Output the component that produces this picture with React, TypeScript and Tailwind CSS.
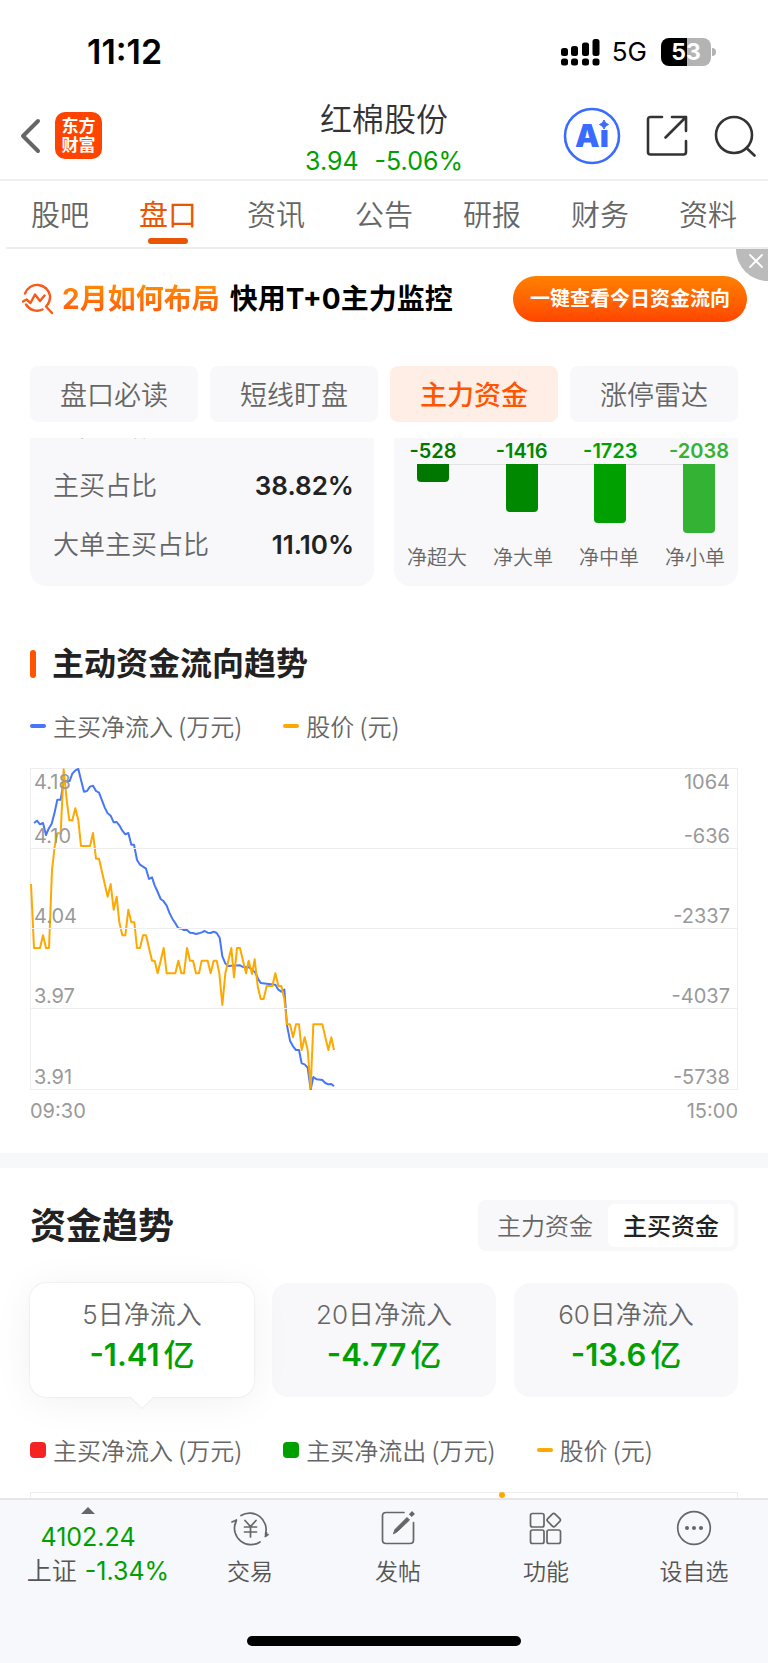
import type { ReactNode } from "react";

const tabs = ["股吧", "盘口", "资讯", "公告", "研报", "财务", "资料"];
const pills = ["盘口必读", "短线盯盘", "主力资金", "涨停雷达"];

const orders = [
  { label: "净超大", value: "-528", height: 18, bar: "bg-[#007800]", text: "text-[#007800]" },
  { label: "净大单", value: "-1416", height: 48, bar: "bg-[#008800]", text: "text-[#008800]" },
  { label: "净中单", value: "-1723", height: 59, bar: "bg-[#00a000]", text: "text-[#00a000]" },
  { label: "净小单", value: "-2038", height: 69, bar: "bg-[#33b233]", text: "text-[#33b233]" },
];

const flows = [
  { label: "5日净流入", value: "-1.41", active: true },
  { label: "20日净流入", value: "-4.77", active: false },
  { label: "60日净流入", value: "-13.6", active: false },
];

const inflowLine =
  "42,219 51,212 60,223 69,219 78,255 86,236 95,221 104,187 112,149 122,149 131,95 140,94 149,93 157,71 166,61 175,57 183,90 192,125 201,123 210,110 219,107 228,123 237,128 246,151 254,172 263,190 272,197 281,217 290,216 298,226 307,242 316,253 325,249 334,284 342,284 351,330 360,344 369,350 378,356 387,387 396,382 404,406 413,426 422,447 431,454 440,467 448,488 457,506 466,520 475,535 484,536 492,540 501,540 510,548 519,549 528,552 537,550 545,547 554,543 563,548 572,549 581,545 590,549 599,563 607,619 616,640 624,648 634,647 660,646 669,651 687,652 700,663 705,666 714,686 722,699 740,701 766,704 775,719 784,725 793,719 801,826 810,872 819,889 828,900 837,900 845,940 854,943 863,953 872,1019 880,981 890,988 907,990 916,999 925,1003 934,1002 942,1009";

const priceLine =
  "33,402 42,594 60,594 69,556 78,594 87,594 96,360 104,290 112,250 122,250 131,58 140,150 148,211 157,211 166,175 175,211 183,288 210,288 219,249 228,326 237,326 263,440 272,402 281,479 290,440 298,517 307,556 316,556 325,479 334,517 343,517 351,594 360,594 369,556 378,556 387,594 396,632 404,632 413,670 422,632 431,594 440,670 466,670 475,632 484,670 492,670 501,594 510,632 519,632 528,670 537,670 545,632 563,632 572,670 581,632 590,632 598,670 607,765 616,670 625,632 634,594 642,682 651,594 660,594 669,632 678,670 686,632 696,672 704,628 713,708 722,747 731,747 740,708 757,708 766,670 775,708 784,708 793,747 801,823 810,823 819,862 828,823 837,823 845,900 854,862 863,900 872,1014 880,823 907,823 925,900 934,862 942,900";

const axisRows = [
  ["4.10", "-636"],
  ["4.04", "-2337"],
  ["3.97", "-4037"],
  ["3.91", "-5738"],
];

function StatusBar() {
  return (
    <div className="flex h-[90px] items-center justify-between pr-[52px] pl-[87px] pt-[14px] text-black">
      <span className="text-[34px] leading-10 font-semibold">11:12</span>
      <div className="flex items-center">
        <svg className="h-7 w-10" viewBox="0 0 40 28" aria-label="信号">
          <rect x="1" y="10" width="7" height="8" rx="2.5" />
          <rect x="11" y="8" width="7" height="10" rx="2.5" />
          <rect x="22" y="4.500" width="7" height="13.500" rx="2.5" />
          <rect x="32.500" y="1" width="7" height="17" rx="2.5" />
          <rect x="1" y="20.500" width="7" height="7" rx="2.5" />
          <rect x="11" y="20.500" width="7" height="7" rx="2.5" />
          <rect x="22" y="20.500" width="7" height="7" rx="2.5" />
          <rect x="32.500" y="20.500" width="7" height="7" rx="2.5" />
        </svg>
        <span className="ml-3 text-[26px] leading-8">5G</span>
        <div className="ml-[14px] flex h-7 w-[50px] items-center justify-center rounded-lg bg-linear-to-r from-black from-53% to-[#b3b3b3] to-53% text-[23px] leading-7 font-bold text-white">
          53
        </div>
        <div className="ml-px h-2 w-1 rounded-r-full bg-[#b3b3b3]" />
      </div>
    </div>
  );
}

function Header() {
  return (
    <header className="grid h-[91px] grid-cols-[1fr_auto_1fr] items-center border-b-2 border-[#eeeeee] px-5 pt-[2px]">
      <div className="flex items-center gap-[14px]">
        <button type="button" aria-label="返回">
          <svg className="h-9 w-[21px]" viewBox="0 0 21 36" fill="none" stroke="#666" strokeWidth="4" strokeLinecap="round" strokeLinejoin="round">
            <path d="M18 3 3 18l15 15" />
          </svg>
        </button>
        <a href="#home" className="flex h-[47px] w-[47px] flex-col items-center justify-center rounded-[10px] bg-[#ff4400] text-[17px] leading-[19px] font-bold text-white">
          <span>东方</span>
          <span>财富</span>
        </a>
      </div>
      <div className="flex flex-col items-center pt-1">
        <h1 className="text-[32px] leading-[46px] font-[350] text-[#333]">红棉股份</h1>
        <p className="flex gap-4 text-[25px] leading-9 text-[#00a000]">
          <span>3.94</span>
          <span>-5.06%</span>
        </p>
      </div>
      <div className="-mr-2 flex items-center justify-end">
        <button type="button" aria-label="Ai">
          <svg className="h-[58px] w-[58px]" viewBox="0 0 58 58">
            <circle cx="29" cy="29" r="27" fill="none" stroke="#3a6bff" strokeWidth="2.6" />
            <text x="12" y="39.500" fontSize="31" fontWeight="900" fill="#3a6bff" fontFamily="Inter, sans-serif">Ai</text>
            <rect x="35" y="12" width="13" height="11" fill="#fff" />
            <path d="M41 13q1 3.5 4.500 4.500-3.5 1-4.500 4.500-1-3.500-4.500-4.500 3.500-1 4.500-4.500z" fill="#3a6bff" stroke="#3a6bff" strokeWidth="1" />
          </svg>
        </button>
        <button type="button" aria-label="分享" className="ml-[25px]">
          <svg className="h-[42px] w-[42px]" viewBox="0 0 42 42" fill="none" stroke="#333" strokeWidth="2.6" strokeLinecap="round" strokeLinejoin="round">
            <path d="M16 2H4.500Q2 2 2 4.500V37q0 2.500 2.500 2.500H37.500Q40 39.500 40 37V26M26 2H40V16M40 2 19.500 22.500" />
          </svg>
        </button>
        <button type="button" aria-label="搜索" className="ml-[26px]">
          <svg className="h-[42px] w-[42px]" viewBox="0 0 42 42" fill="none" stroke="#333" strokeWidth="2.6" strokeLinecap="round">
            <circle cx="20" cy="20" r="18" />
            <path d="m32.500 33 8 7.500" />
          </svg>
        </button>
      </div>
    </header>
  );
}

function Banner() {
  return (
    <section className="relative flex h-[97px] items-center justify-between overflow-hidden pt-[2px] pr-[21px] pl-[22px]">
      <div className="flex items-center">
        <svg className="mr-2 h-8 w-8" viewBox="0 0 32 32" fill="none" stroke="#f85a1a" strokeWidth="2.400" strokeLinecap="round" strokeLinejoin="round">
          <path d="M3 10.500A13 13 0 0 1 28 12.500Q28.500 19 24 23.500L30 30M4 21.500A13 13 0 0 0 20.500 26.500" />
          <path d="M1 18.500 4.500 16.500 8.500 20 13 11.500 18 18 22.500 12.500" />
        </svg>
        <strong className="bg-linear-to-b from-[#ff9500] to-[#ff4d0d] bg-clip-text text-[28px] leading-10 font-bold text-transparent">2月如何布局</strong>
        <strong className="ml-[10px] text-[28px] leading-10 font-bold text-black">快用T+0主力监控</strong>
      </div>
      <a href="#flow" className="flex h-[46px] items-center rounded-full bg-linear-to-b from-[#ff8000] to-[#ff4400] px-[17px] pt-px text-[20px] font-bold text-white">
        一键查看今日资金流向
      </a>
      <button type="button" aria-label="关闭" className="absolute top-0 right-0 flex h-8 w-8 items-center justify-center rounded-bl-full bg-[#bbbbbb]">
        <svg className="mb-2 ml-2 h-[14px] w-[14px]" viewBox="0 0 14 14" stroke="#fff" strokeWidth="1.800" strokeLinecap="round">
          <path d="m1 1 12 12M13 1 1 13" />
        </svg>
      </button>
    </section>
  );
}

function Metric({ label, value }: { label: string; value: string }) {
  return (
    <div className="flex h-[59px] items-center justify-between">
      <dt className="text-[26px] font-[350] text-[#666]">{label}</dt>
      <dd className="text-[26px] font-semibold text-[#222]">{value}</dd>
    </div>
  );
}

function Summary() {
  return (
    <section className="mx-[30px] grid grid-cols-2 gap-5 overflow-hidden">
      <div className="h-[148px] overflow-hidden rounded-b-2xl bg-[#f8f8fa] pr-5 pl-[23px]">
        <dl className="-mt-[41px]">
          <Metric label="主买净额" value="" />
          <Metric label="主买占比" value="38.82%" />
          <Metric label="大单主买占比" value="11.10%" />
        </dl>
      </div>
      <div className="h-[148px] rounded-b-2xl bg-[#f8f8fa]">
        <div className="mx-[23px] flex justify-between border-b border-[#e3e3e3]">
          {orders.map((o) => (
            <div key={o.label} className="flex w-8 flex-col items-center">
              <span className={`flex h-[26px] items-center text-[20px] font-semibold ${o.text}`}>{o.value}</span>
            </div>
          ))}
        </div>
        <div className="-mt-px flex h-[75px] items-start justify-between px-[23px]">
          {orders.map((o) => (
            <div key={o.label} className={`w-8 rounded-b-[4px] ${o.bar}`} style={{ height: o.height }} />
          ))}
        </div>
        <div className="grid grid-cols-4 pt-[6px] text-center text-[20px] leading-[26px] font-[350] text-[#666]">
          {orders.map((o) => (
            <span key={o.label}>{o.label}</span>
          ))}
        </div>
      </div>
    </section>
  );
}

function Legend({ marker, children }: { marker: string; children: ReactNode }) {
  return (
    <span className="flex items-center gap-[7px]">
      <i className={marker} />
      {children}
    </span>
  );
}

const legendRow = "flex gap-[41px] font-['Noto_Sans_CJK_SC',sans-serif] text-[24px] leading-9 font-[350] text-[#666]";

function TrendChart() {
  return (
    <section className="px-[30px] pt-[55px] pb-[29px]">
      <h2 className="flex items-center gap-4 text-[32px] leading-[46px] font-bold text-[#222]">
        <i className="h-7 w-[6px] rounded-full bg-[#ff5500]" />
        主动资金流向趋势
      </h2>
      <div className={`mt-[21px] ${legendRow}`}>
        <Legend marker="h-1 w-4 rounded-full bg-[#4676fa]">主买净流入 (万元)</Legend>
        <Legend marker="h-1 w-4 rounded-full bg-[#ffa800]">股价 (元)</Legend>
      </div>
      <div className="relative mt-6 border border-[#eeeeee] text-[20px] leading-6 text-[#999]">
        <svg className="absolute -inset-px h-[calc(100%+2px)] w-[calc(100%+2px)]" viewBox="30 54 2124 966" preserveAspectRatio="none" fill="none" strokeWidth="2" strokeLinejoin="round">
          <polyline points={inflowLine} stroke="#4676fa" vectorEffect="non-scaling-stroke" />
          <polyline points={priceLine} stroke="#ffa800" vectorEffect="non-scaling-stroke" />
        </svg>
        {axisRows.map(([price, flow], i) => (
          <div key={price} className="relative flex h-20 flex-col justify-between border-b border-[#eeeeee] pt-px pr-[7px] pl-[3px] last:border-b-0">
            <div className="flex justify-between">
              <span>{i === 0 ? "4.18" : ""}</span>
              <span>{i === 0 ? "1064" : ""}</span>
            </div>
            <div className="flex justify-between">
              <span>{price}</span>
              <span>{flow}</span>
            </div>
          </div>
        ))}
      </div>
      <div className="mt-2 flex justify-between text-[20px] leading-[26px] text-[#999]">
        <span>09:30</span>
        <span>15:00</span>
      </div>
    </section>
  );
}

function FundTrend() {
  return (
    <section className="border-t-[15px] border-[#f7f8fa] px-[30px] pt-8">
      <div className="flex items-center justify-between">
        <h2 className="pt-[2px] text-[36px] leading-[49px] font-bold text-[#222]">资金趋势</h2>
        <div className="flex h-[51px] rounded-lg bg-[#f8f8fa] p-1 text-[24px]">
          <button type="button" className="px-[15px] pt-[2px] font-[350] text-[#666]">主力资金</button>
          <button type="button" className="rounded-md bg-white px-[15px] pt-[2px] font-medium text-[#222]">主买资金</button>
        </div>
      </div>
      <div className="mt-8 grid grid-cols-3 gap-[18px]">
        {flows.map((f) => (
          <button
            type="button"
            key={f.label}
            className={
              f.active
                ? "relative flex h-[114px] flex-col items-center rounded-2xl bg-white pt-[14px] shadow-[0_0_2px_rgba(0,0,0,0.12),0_4px_40px_rgba(0,0,0,0.06)]"
                : "flex h-[114px] flex-col items-center rounded-2xl bg-[#f8f8fa] pt-[14px]"
            }
          >
            <span className="text-[26px] leading-9 font-[350] text-[#666]">{f.label}</span>
            <span className="flex gap-1 text-[31px] leading-[44px] font-semibold text-[#00a000]">
              {f.value}
              <span className="font-medium">亿</span>
            </span>
            {f.active && (
              <svg className="absolute top-full left-1/2 -mt-px h-[13px] w-6 -translate-x-1/2" viewBox="0 0 24 13">
                <path d="M0 0h24L12 12.500z" fill="#fff" />
                <path d="M0 1 12 12.500 24 1" fill="none" stroke="#ececec" />
              </svg>
            )}
          </button>
        ))}
      </div>
      <div className={`mt-[35px] ${legendRow}`}>
        <Legend marker="h-4 w-4 rounded-[4px] bg-[#f62323]">主买净流入 (万元)</Legend>
        <Legend marker="h-4 w-4 rounded-[4px] bg-[#00a000]">主买净流出 (万元)</Legend>
        <Legend marker="h-1 w-4 rounded-full bg-[#ffa800]">股价 (元)</Legend>
      </div>
      <div className="mt-6 flex h-[6px] items-end justify-center border border-b-0 border-[#eeeeee] pl-[236px]">
        <i className="h-[6px] w-[6px] rounded-full bg-[#ffa800]" />
      </div>
    </section>
  );
}

function NavItem({ label, children }: { label: string; children: ReactNode }) {
  return (
    <button type="button" className="flex flex-1 flex-col items-center pt-2">
      <svg className="h-10 w-10" viewBox="0 0 40 40" fill="none" stroke="#666" strokeWidth="1.700" strokeLinecap="round" strokeLinejoin="round">
        {children}
      </svg>
      <span className="mt-[7px] text-[23px] leading-[34px] font-[350] text-[#555]">{label}</span>
    </button>
  );
}

function BottomBar() {
  return (
    <footer className="flex grow flex-col border-t-2 border-[#e6e6e6] bg-[#f7f8fb]">
      <nav className="flex">
        <a href="#index" className="flex w-[176px] flex-col items-center pt-[7px] text-[25px] leading-[34px] text-[#00a000]">
          <svg className="h-[7px] w-[14px]" viewBox="0 0 14 7">
            <path d="M7 0 14 7H0z" fill="#666" />
          </svg>
          <span className="mt-[6px]">4102.24</span>
          <span className="flex gap-2 pl-5 whitespace-nowrap">
            <span className="font-[350] text-[#555]">上证</span>-1.34%
          </span>
        </a>
        <NavItem label="交易">
          <path d="M11 7.500A16.500 16.500 0 0 1 35.500 26M36.500 24.500 35.300 28.500 38 26.500M30 34A16.500 16.500 0 0 1 5.500 14.500M2 14 6.500 12 5 17" />
          <path d="m15 12.500 5.500 6 5.500-6M20.500 18.500V29M14.500 19H26.500M14.500 24H26.500" />
        </NavItem>
        <NavItem label="发帖">
          <path d="M26 4.500H8Q4.500 4.500 4.500 8V32q0 3.500 3.500 3.500H32q3.500 0 3.500-3.500V14.500" />
          <path d="M32.300 7.700 35.500 4.500" strokeWidth="4" strokeLinecap="butt" />
          <path d="M15.500 25.500 17 21.500 29 9.500 31.500 12 19.500 23.500z" fill="#666" strokeWidth="1" />
        </NavItem>
        <NavItem label="功能">
          <rect x="4.500" y="5.500" width="13.500" height="13.500" rx="2" />
          <rect x="4.500" y="22" width="13.500" height="13.500" rx="2" />
          <rect x="21" y="22" width="13.500" height="13.500" rx="2" />
          <rect x="22.500" y="6.800" width="10.500" height="10.500" rx="2" transform="rotate(45 27.750 12.050)" />
        </NavItem>
        <NavItem label="设自选">
          <circle cx="20" cy="20" r="16.300" />
          <g fill="#666" stroke="none">
            <circle cx="13" cy="20" r="2" />
            <circle cx="20" cy="20" r="2" />
            <circle cx="27" cy="20" r="2" />
          </g>
        </NavItem>
      </nav>
      <div className="mx-auto mt-auto mb-[17px] h-[10px] w-[274px] rounded-full bg-black" />
    </footer>
  );
}

export default function App() {
  return (
    <div className="flex min-h-screen flex-col bg-white font-['Inter','Noto_Sans_CJK_SC',sans-serif]">
      <StatusBar />
      <Header />
      <nav className="ml-[6px] flex h-[68px] border-b-2 border-[#eeeeee] pr-[6px]">
        {tabs.map((t, i) => (
          <a
            key={t}
            href={`#tab-${i}`}
            className={
              i === 1
                ? "flex flex-1 flex-col items-center pt-[14px] text-[29px] leading-[42px] font-normal text-[#ea5504]"
                : "flex flex-1 flex-col items-center pt-[14px] text-[29px] leading-[42px] font-[350] text-[#666]"
            }
          >
            {t}
            {i === 1 && <i className="mt-px h-[6px] w-10 rounded-full bg-[#ea5504]" />}
          </a>
        ))}
      </nav>
      <Banner />
      <div className="mx-[30px] mt-5 mb-4 grid grid-cols-4 gap-3">
        {pills.map((p, i) => (
          <button
            type="button"
            key={p}
            className={
              i === 2
                ? "h-14 rounded-lg bg-[#ffeee6] pt-[5px] text-[27px] font-medium text-[#ff5500]"
                : "h-14 rounded-lg bg-[#f8f8fa] pt-[5px] text-[27px] font-[350] text-[#666]"
            }
          >
            {p}
          </button>
        ))}
      </div>
      <Summary />
      <TrendChart />
      <FundTrend />
      <BottomBar />
    </div>
  );
}
